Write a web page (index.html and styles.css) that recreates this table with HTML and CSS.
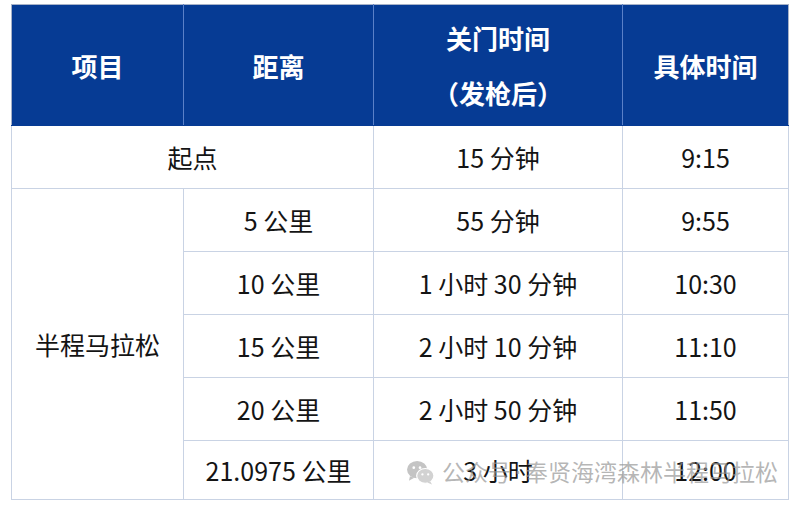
FILE: index.html
```html
<!DOCTYPE html>
<html lang="zh">
<head>
<meta charset="utf-8">
<link rel="stylesheet" href="styles.css">
</head>
<body>
<div class="page">
  <table class="grid">
    <colgroup>
      <col class="c1"><col class="c2"><col class="c3"><col class="c4">
    </colgroup>
    <thead>
      <tr>
        <th>项目</th>
        <th>距离</th>
        <th><span class="hl">关门时间</span><span class="hl">（发枪后）</span></th>
        <th>具体时间</th>
      </tr>
    </thead>
    <tbody>
      <tr class="r-start">
        <td colspan="2">起点</td>
        <td>15 分钟</td>
        <td>9:15</td>
      </tr>
      <tr>
        <td rowspan="5">半程马拉松</td>
        <td>5 公里</td>
        <td>55 分钟</td>
        <td>9:55</td>
      </tr>
      <tr>
        <td>10 公里</td>
        <td>1 小时 30 分钟</td>
        <td>10:30</td>
      </tr>
      <tr>
        <td>15 公里</td>
        <td>2 小时 10 分钟</td>
        <td>11:10</td>
      </tr>
      <tr>
        <td>20 公里</td>
        <td>2 小时 50 分钟</td>
        <td>11:50</td>
      </tr>
      <tr class="r-last">
        <td>21.0975 公里</td>
        <td>3 小时</td>
        <td>12:00</td>
      </tr>
    </tbody>
  </table>
  <div class="watermark">
    <svg class="wm-icon" viewBox="0 0 30 26" width="29" height="25">
      <ellipse cx="11.5" cy="10" rx="10.5" ry="9" fill="#c4c4c4"/>
      <path d="M4 17 L3 21.5 L8.5 18.5 Z" fill="#c4c4c4"/>
      <ellipse cx="20" cy="16.5" rx="9" ry="7.7" fill="#d2d2d2" stroke="#fff" stroke-width="1.2"/>
      <path d="M25 22 L27 25.5 L22 23.3 Z" fill="#d2d2d2"/>
      <circle cx="8" cy="8" r="1.4" fill="#fff"/>
      <circle cx="14.5" cy="8" r="1.4" fill="#fff"/>
      <circle cx="17" cy="15" r="1.2" fill="#fff"/>
      <circle cx="23" cy="15" r="1.2" fill="#fff"/>
    </svg>
    <span class="wm-text">公众号<span class="wm-dot">·</span>奉贤海湾森林半程马拉松</span>
  </div>
</div>
</body>
</html>
```

FILE: styles.css
```css
html, body {
  margin: 0;
  padding: 0;
  background: #ffffff;
}

.page {
  position: relative;
  width: 800px;
  height: 510px;
  padding: 4px 0 0 11px;
  box-sizing: border-box;
  font-family: "Noto Sans CJK SC", "Noto Sans", sans-serif;
}

.grid {
  border-collapse: collapse;
  table-layout: fixed;
  width: 777px;
  border: 1px solid #a7b2c8;
}

.c1 { width: 172px; }
.c2 { width: 190px; }
.c3 { width: 249px; }
.c4 { width: 166px; }

.grid th {
  background: #063b94;
  color: #ffffff;
  font-weight: 700;
  font-size: 26px;
  height: 120px;
  padding: 0;
  text-align: center;
  vertical-align: middle;
  border-left: 1px solid #5a80c8;
  border-top: none;
  border-bottom: 1px solid #063b94;
}

.grid th:first-child {
  border-left: none;
}

.hl {
  display: block;
  line-height: 55px;
}

.grid td {
  font-size: 25px;
  color: #141414;
  text-align: center;
  vertical-align: middle;
  height: 62px;
  padding: 0;
  border: 1px solid #c9d3e4;
  line-height: 30px;
}

.r-start td {
  height: 62px;
}

.r-last td {
  height: 58px;
}

.watermark {
  position: absolute;
  left: 406px;
  top: 456px;
  display: flex;
  align-items: center;
  gap: 7px;
  white-space: nowrap;
}

.wm-icon {
  display: block;
}

.wm-text {
  font-family: "Noto Sans CJK SC", sans-serif;
  font-size: 23px;
  color: rgba(150, 150, 150, 0.7);
  line-height: 30px;
  white-space: nowrap;
}

.wm-dot {
  display: inline-block;
  width: 14px;
  text-align: center;
  font-family: "DejaVu Sans", sans-serif;
}
```
